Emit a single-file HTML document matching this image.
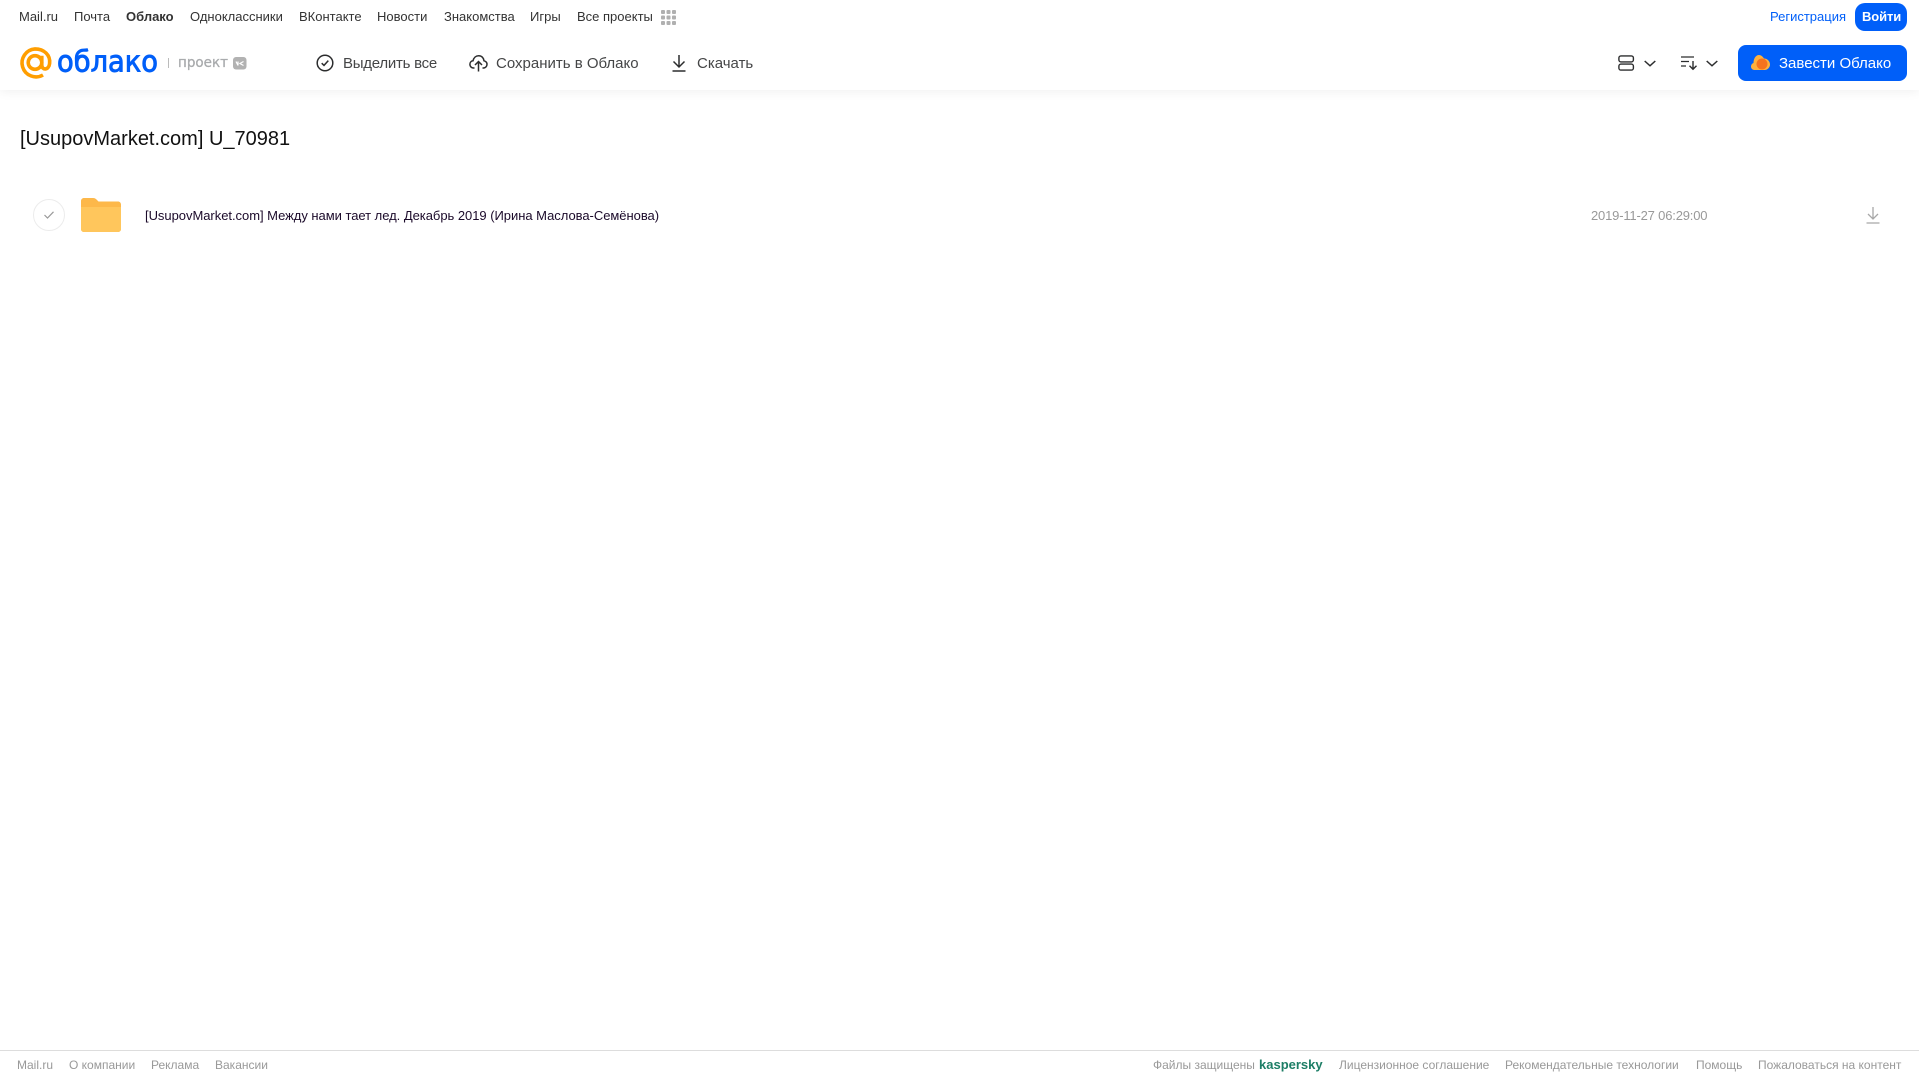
<!DOCTYPE html>
<html lang="ru">
<head>
<meta charset="utf-8">
<title>[UsupovMarket.com] U_70981</title>
<style>
html,body{margin:0;padding:0;width:1919px;height:1079px;overflow:hidden;background:#fff;font-family:"Liberation Sans",Arial,sans-serif;color:#2c2d2e}
.t{position:absolute;white-space:nowrap;line-height:1}
.n{font-size:13px;top:10px;color:#333}
.b{font-size:15px;top:56px;color:#454647}
.f{font-size:12px;top:1059px;color:#999}
svg{position:absolute;overflow:visible}
#hd{position:absolute;left:0;top:0;width:1919px;height:90px;background:#fff;box-shadow:0 2px 10px rgba(0,0,0,.06)}
</style>
</head>
<body>
<div id="hd"></div>

<span class="t n" style="left:19px">Mail.ru</span>
<span class="t n" style="left:74px">Почта</span>
<span class="t n" style="left:126px;font-weight:700">Облако</span>
<span class="t n" style="left:190px">Одноклассники</span>
<span class="t n" style="left:299px">ВКонтакте</span>
<span class="t n" style="left:377px">Новости</span>
<span class="t n" style="left:444px">Знакомства</span>
<span class="t n" style="left:530px">Игры</span>
<span class="t n" style="left:577px">Все проекты</span>
<svg style="left:661px;top:10px" width="15" height="15" fill="#b0b0b0">
<rect x="0" y="0" width="4" height="4" rx="1"/><rect x="5.500" y="0" width="4" height="4" rx="1"/><rect x="11" y="0" width="4" height="4" rx="1"/>
<rect x="0" y="5.500" width="4" height="4" rx="1"/><rect x="5.500" y="5.500" width="4" height="4" rx="1"/><rect x="11" y="5.500" width="4" height="4" rx="1"/>
<rect x="0" y="11" width="4" height="4" rx="1"/><rect x="5.500" y="11" width="4" height="4" rx="1"/><rect x="11" y="11" width="4" height="4" rx="1"/>
</svg>

<span class="t n" style="left:1770px;color:#005ff9">Регистрация</span>
<div style="position:absolute;left:1855px;top:3px;width:52px;height:28px;border-radius:10px;background:#005ff9"></div>
<span class="t n" style="left:1862px;color:#fff;font-weight:700;font-size:13px;letter-spacing:-.1px">Войти</span>

<svg style="left:19px;top:47px" width="33" height="33" viewBox="0 0 33 33" fill="none" stroke="#ff9e00" stroke-width="3.600">
<circle cx="16" cy="15.500" r="6.800"/>
<path d="M22.800 8.700V18C22.800 23.500 29.800 23.500 30.600 16.500 31.600 8 25 1.900 16 1.900A14 14 0 1 0 24 28"/>
</svg>
<svg style="left:56px;top:44px" width="106" height="36">
<text x="1" y="27.500" font-family="DejaVu Sans" font-size="29" fill="#005ff9" stroke="#005ff9" stroke-width=".9" textLength="101" lengthAdjust="spacingAndGlyphs">облако</text>
</svg>
<div style="position:absolute;left:168px;top:58px;width:1px;height:10px;background:#bbb"></div>
<svg style="left:178px;top:52px" width="52" height="20">
<text x="0" y="15" font-family="DejaVu Sans" font-size="14" fill="#a9abad" stroke="#a9abad" stroke-width=".3" textLength="50" lengthAdjust="spacingAndGlyphs">проект</text>
</svg>
<svg style="left:233px;top:57px" width="14" height="13">
<rect width="13.500" height="12.500" rx="3" fill="#b2b2b2"/>
<path d="M3 4.500 5 8.500M5 8.500V4.500M10.500 4.500 7 6.500 10.500 8.500" stroke="#fff" stroke-width="1.200" fill="none"/>
</svg>

<svg style="left:316px;top:54px" width="18" height="18" fill="none" stroke="#2c2d2e" stroke-width="1.500">
<circle cx="9" cy="9" r="7.800"/><path d="M5.700 9.200 8 11.400 12.300 6.600"/>
</svg>
<span class="t b" style="left:343px;letter-spacing:-.25px">Выделить все</span>

<svg style="left:469px;top:54px" width="19" height="18" fill="none" stroke="#2c2d2e" stroke-width="1.500">
<path d="M5.500 14H4.500C2 14 .9 12 .9 10.300 .9 8.300 2.300 7 4 6.800 4.700 3.500 7 1.700 9.700 1.700 12.700 1.700 14.700 3.900 15 6.800 16.800 7.200 18 8.500 18 10.300 18 12.300 16.500 14 14.500 14H13.500"/>
<path d="M9.500 17.500V8M6 11l3.500-3.500L13 11"/>
</svg>
<span class="t b" style="left:496px">Сохранить в Облако</span>

<svg style="left:672px;top:55px" width="14" height="17" fill="none" stroke="#2c2d2e" stroke-width="1.500">
<path d="M7 0V11.500M1.500 6.500 7 12 12.500 6.500M.5 16H13.500"/>
</svg>
<span class="t b" style="left:697px">Скачать</span>

<svg style="left:1618px;top:55px" width="17" height="16" fill="none" stroke="#2c2d2e" stroke-width="1.400">
<rect x=".9" y=".9" width="14.500" height="6" rx="2"/><rect x=".9" y="9.100" width="14.500" height="6" rx="2"/>
</svg>
<svg style="left:1644px;top:60px" width="13" height="8" fill="none" stroke="#2c2d2e" stroke-width="1.500"><path d="M.7 1 6 5.800 11.300 1"/></svg>
<svg style="left:1681px;top:56px" width="17" height="14" fill="none" stroke="#2c2d2e" stroke-width="1.200">
<path d="M0 1H13M0 5.500H8M0 10H5"/><path stroke-width="1.400" d="M12 5V13M8.500 9.800 12 13.300 15.500 9.800"/>
</svg>
<svg style="left:1706px;top:60px" width="13" height="8" fill="none" stroke="#2c2d2e" stroke-width="1.500"><path d="M.7 1 6 5.800 11.300 1"/></svg>

<div style="position:absolute;left:1738px;top:45px;width:169px;height:36px;border-radius:8px;background:#005ff9"></div>
<svg style="left:1751px;top:54px" width="19" height="17">
<path d="M3.500 16C1.500 16 0 14.500 0 12.500 0 10.800 1 9.500 2.500 9 2.500 5 4.500 1 8 1 10.500 1 12 3 13 4.500 16.500 4.500 19 7.500 19 10.500 19 13.500 16.500 16 13.500 16Z" fill="#ffb13d"/>
<circle cx="11" cy="10" r="5.500" fill="#f5731f"/>
</svg>
<span class="t" style="left:1779px;top:56px;font-size:15px;color:#fff">Завести Облако</span>

<span class="t" style="left:20px;top:129px;font-size:20px;color:#111">[UsupovMarket.com] U_70981</span>

<div style="position:absolute;left:33px;top:199px;width:30px;height:30px;border:1px solid #ececec;border-radius:50%"></div>
<svg style="left:44px;top:211px" width="10" height="8" fill="none" stroke="#999" stroke-width="1.200"><path d="M.5 4 3.500 7 9.500 .8"/></svg>
<svg style="left:81px;top:198px" width="40" height="34">
<path d="M0 3C0 1.300 1.300 0 3 0H12C14 0 15 1 16 2L17.500 3.500H37C38.700 3.500 40 4.800 40 6.500V31C40 32.700 38.700 34 37 34H3C1.300 34 0 32.700 0 31Z" fill="#fdb84a"/>
<path d="M0 9H40V31C40 32.700 38.700 34 37 34H3C1.300 34 0 32.700 0 31Z" fill="#ffc65c"/>
</svg>
<span class="t" style="left:145px;top:209px;font-size:13px;color:#1b0a2a;letter-spacing:-.035px">[UsupovMarket.com] Между нами тает лед. Декабрь 2019 (Ирина Маслова-Семёнова)</span>
<span class="t" style="left:1591px;top:209px;font-size:13px;color:#999;letter-spacing:-.18px">2019-11-27 06:29:00</span>
<svg style="left:1866px;top:207px" width="14" height="17" fill="none" stroke="#a8a8a8" stroke-width="1.300">
<path d="M7 0V12M2 7 7 12 12 7M.5 16H13.500"/>
</svg>

<div style="position:absolute;left:0;top:1050px;width:1919px;height:1px;background:#ddd"></div>
<span class="t f" style="left:17px">Mail.ru</span>
<span class="t f" style="left:69px">О компании</span>
<span class="t f" style="left:151px">Реклама</span>
<span class="t f" style="left:215px">Вакансии</span>
<span class="t f" style="left:1153px">Файлы защищены</span>
<span class="t f" style="left:1259px;color:#1d7e66;font-weight:700;font-size:13px;top:1058px">kaspersky</span>
<span class="t f" style="left:1339px">Лицензионное соглашение</span>
<span class="t f" style="left:1505px">Рекомендательные технологии</span>
<span class="t f" style="left:1696px">Помощь</span>
<span class="t f" style="left:1758px">Пожаловаться на контент</span>
</body>
</html>
